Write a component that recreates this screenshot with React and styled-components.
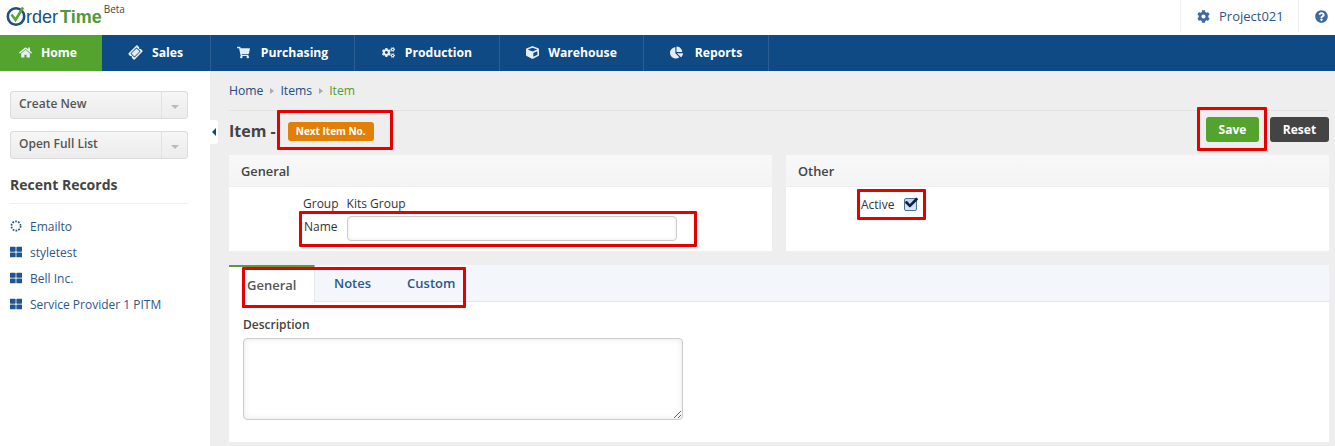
import React from "react";
import styled, { createGlobalStyle } from "styled-components";
import {
  FaHome,
  FaTicketAlt,
  FaShoppingCart,
  FaCogs,
  FaCube,
  FaChartPie,
  FaCog,
  FaQuestionCircle,
  FaThLarge,
  FaCheck,
} from "react-icons/fa";

const GlobalStyle = createGlobalStyle`
  html, body {
    margin: 0;
    padding: 0;
    height: 446px;
    overflow: hidden;
    background: #eee;
    font-family: "Open Sans", "Liberation Sans", sans-serif;
    font-size: 12px;
    color: #444;
  }
  * { box-sizing: border-box; }
`;

const Page = styled.div`
  width: 1335px;
  height: 446px;
  display: flex;
  flex-direction: column;
  overflow: hidden;
`;

const TopBar = styled.header`
  height: 35px;
  background: #fff;
  display: flex;
  justify-content: space-between;
`;

const Logo = styled.div`
  display: flex;
  align-items: flex-start;
  padding: 5px 0 0 6px;
`;

const LogoWord = styled.span`
  font-family: "Liberation Sans", sans-serif;
  font-weight: ${(p) => p.$weight};
  font-size: 18px;
  line-height: 24px;
  color: ${(p) => p.$color};
  margin-left: ${(p) => p.$gap || 0}px;
`;

const LogoBeta = styled.sup`
  font-size: 10px;
  line-height: 12px;
  color: #444;
  margin: -2px 0 0 2px;
  vertical-align: baseline;
`;

const TopRight = styled.div`
  display: flex;
  height: 32px;
`;

const TopCell = styled.div`
  display: flex;
  align-items: center;
  gap: 9px;
  height: 32px;
  width: ${(p) => p.$width}px;
  padding-left: ${(p) => p.$pad}px;
  border-left: 1px solid #eee;
  color: #2f5688;
  font-size: 13px;
  svg {
    color: #3f6aa0;
    font-size: 13px;
  }
`;

const Nav = styled.nav`
  height: 36px;
  background: #0f4a84;
  display: flex;
`;

const NavItem = styled.div`
  width: ${(p) => p.$width}px;
  display: flex;
  align-items: center;
  justify-content: center;
  gap: ${(p) => p.$gap}px;
  padding-bottom: 2px;
  padding-right: ${(p) => p.$shift || 0}px;
  color: #fff;
  font-size: 12.2px;
  font-weight: 700;
  background: ${(p) => (p.$active ? "#55a32f" : "transparent")};
  border-right: ${(p) => (p.$active ? "none" : "1px solid #2b5f94")};
  svg {
    font-size: 13px;
    color: #e6edf4;
  }
`;

const TicketIcon = styled(FaTicketAlt)`
  transform: rotate(-45deg);
`;

const Body = styled.div`
  flex: 1;
  display: flex;
  min-height: 0;
`;

const Sidebar = styled.aside`
  width: 210px;
  background: #fff;
  padding: 20px 22px 0 10px;
  position: relative;
`;

const CollapseTab = styled.div`
  position: absolute;
  left: 210px;
  top: 49px;
  width: 8px;
  height: 24px;
  background: #fff;
  border-radius: 0 3px 3px 0;
  display: flex;
  align-items: center;
  justify-content: center;
  &::before {
    content: "";
    border-style: solid;
    border-width: 4px 4px 4px 0;
    border-color: transparent #0f4a84 transparent transparent;
  }
`;

const SplitButton = styled.div`
  display: flex;
  height: 28px;
  margin-bottom: 12px;
  border: 1px solid #ddd;
  border-radius: 3px;
  background: linear-gradient(#f6f6f6, #ececec);
  color: #555;
  font-weight: 600;
  font-size: 12px;
`;

const SplitLabel = styled.span`
  flex: 1;
  padding: 3px 0 0 8px;
`;

const SplitCaret = styled.span`
  width: 26px;
  border-left: 1px solid #e2e2e2;
  display: flex;
  align-items: center;
  justify-content: center;
  padding-top: 4px;
  &::before {
    content: "";
    border-style: solid;
    border-width: 4px 4px 0 4px;
    border-color: #bbb transparent transparent transparent;
  }
`;

const SideHeading = styled.h3`
  margin: 16px 0 0;
  padding-bottom: 8px;
  font-size: 14px;
  line-height: 20px;
  font-weight: 700;
  color: #444;
  border-bottom: 1px solid #eee;
`;

const RecordList = styled.ul`
  list-style: none;
  margin: 9px 0 0;
  padding: 0;
`;

const RecordRow = styled.li`
  height: 26px;
  display: flex;
  align-items: center;
  gap: 8px;
  color: #2f5688;
  font-size: 12px;
  white-space: nowrap;
  svg {
    width: 12px;
    font-size: 12px;
    color: #1f5590;
  }
`;

const Main = styled.main`
  flex: 1;
  padding: 10px 6px 0 19px;
  min-width: 0;
`;

const Breadcrumb = styled.div`
  display: flex;
  align-items: center;
  gap: 6.5px;
  height: 19px;
`;

const Crumb = styled.span`
  color: ${(p) => (p.$current ? "#4f9f2a" : "#234c80")};
  font-size: 12.2px;
`;

const CrumbArrow = styled.span`
  border-style: solid;
  border-width: 3.5px 0 3.5px 4px;
  border-color: transparent transparent transparent #aaa;
`;

const TitleRow = styled.div`
  display: flex;
  align-items: center;
  justify-content: space-between;
  margin-top: 10px;
  height: 45px;
  padding-bottom: 3px;
  background: linear-gradient(#e3e3e3, #e3e3e3) top left / 100% 1px no-repeat;
`;

const TitleLeft = styled.div`
  display: flex;
  align-items: center;
  gap: 12px;
`;

const Title = styled.h1`
  margin: 0;
  font-size: 16px;
  font-weight: 700;
  color: #444;
`;

const Badge = styled.span`
  display: inline-flex;
  align-items: center;
  justify-content: center;
  width: 86px;
  height: 19px;
  border-radius: 3px;
  background: #e27f07;
  color: #fff;
  font-size: 10px;
  font-weight: 700;
`;

const Actions = styled.div`
  display: flex;
  gap: 11px;
  margin-top: -3px;
`;

const Button = styled.button`
  display: block;
  width: ${(p) => p.$width}px;
  height: 25px;
  border: none;
  border-radius: 3px;
  background: ${(p) => p.$bg};
  color: #fff;
  font-family: inherit;
  font-size: 12px;
  font-weight: 700;
  padding: 0;
`;

// red annotation box drawn over a part of the form
const Marked = styled.div`
  position: relative;
  &::after {
    content: "";
    position: absolute;
    inset: ${(p) => p.$inset};
    border: 3px solid #e60000;
    border-radius: 1px;
    pointer-events: none;
  }
`;

const PanelRow = styled.div`
  display: grid;
  grid-template-columns: 543px 543px;
  gap: 14px;
`;

const Panel = styled.section`
  height: 96px;
  background: #fff;
`;

const PanelHead = styled.div`
  height: 32px;
  padding: 8px 0 0 12px;
  background: linear-gradient(#f8f8f8, #f4f4f4);
  border-bottom: 1px solid #eee;
  font-size: 12.8px;
  font-weight: 600;
  line-height: 17px;
  color: #444;
`;

const FieldRow = styled.div`
  display: flex;
  align-items: center;
  height: ${(p) => p.$height}px;
  padding: ${(p) => p.$top || 0}px 0 0 ${(p) => p.$indent}px;
  gap: ${(p) => p.$gap}px;
  font-size: 12px;
  color: #333;
`;

const NameLabel = styled.span`
  font-weight: 500;
  margin-top: -4px;
`;

const NameInput = styled.div`
  width: 330px;
  height: 25px;
  border: 1px solid #ccc;
  border-radius: 4px;
  background: #fff;
  box-shadow: inset 0 0 4px rgba(0, 0, 0, 0.08);
`;

const ActiveField = styled.div`
  display: flex;
  align-items: center;
  gap: 10px;
  font-weight: 500;
`;

const CheckBox = styled.span`
  position: relative;
  width: 13px;
  height: 13px;
  border: 1px solid #4a6f9c;
  border-radius: 2px;
  background: linear-gradient(#bcd3f0, #dce9f8);
  svg {
    position: absolute;
    left: 0;
    top: -3px;
    font-size: 13px;
    color: #0c2340;
  }
`;

const TabPanel = styled.section`
  margin-top: 14px;
  height: 177px;
  background: #fff;
`;

const TabStrip = styled.div`
  display: flex;
  height: 37px;
  background: #f3f6fb;
  border-bottom: 1px solid #e4e7ec;
`;

const ActiveTab = styled.div`
  width: 86px;
  height: 37px;
  padding: 9px 0 0 18px;
  background: #fff;
  border-top: 2px solid #5d9a3a;
  border-right: 1px solid #e4e7ec;
  color: #555;
  font-size: 13px;
  font-weight: 600;
`;

const Tab = styled.div`
  padding: 9px 0 0 ${(p) => p.$pad}px;
  color: #2f5688;
  font-size: 13px;
  font-weight: 600;
`;

const TabBody = styled.div`
  padding: 15px 14px 0;
`;

const FieldLabel = styled.div`
  font-size: 12px;
  font-weight: 600;
  line-height: 16px;
  color: #444;
  margin-bottom: 5px;
`;

const TextArea = styled.textarea`
  display: block;
  width: 440px;
  height: 82px;
  border: 1px solid #ccc;
  border-radius: 4px;
  background: #fff;
  box-shadow: inset 0 0 6px rgba(0, 0, 0, 0.1);
  outline: none;
`;

const DottedCircle = () => (
  <svg width="12" height="12" viewBox="0 0 12 12">
    <circle
      cx="6"
      cy="6"
      r="4.6"
      fill="none"
      stroke="#1f5590"
      strokeWidth="1.7"
      strokeDasharray="1.7 1.2"
    />
  </svg>
);

const navItems = [
  { label: "Sales", icon: <TicketIcon />, width: 109, gap: 10 },
  { label: "Purchasing", icon: <FaShoppingCart />, width: 144, gap: 11 },
  { label: "Production", icon: <FaCogs />, width: 145, gap: 10 },
  { label: "Warehouse", icon: <FaCube />, width: 144, gap: 9 },
  { label: "Reports", icon: <FaChartPie />, width: 125, gap: 12 },
];

const records = [
  { label: "Emailto", icon: <DottedCircle /> },
  { label: "styletest", icon: <FaThLarge /> },
  { label: "Bell Inc.", icon: <FaThLarge /> },
  { label: "Service Provider 1 PITM", icon: <FaThLarge /> },
];

const App = () => {
  return (
    <Page>
      <GlobalStyle />
      <TopBar>
        <Logo>
          <svg width="20" height="22" viewBox="0 0 20 22">
            <circle cx="10" cy="11.5" r="8.2" fill="none" stroke="#1d4f80" strokeWidth="2.6" />
            <path d="M5.5 9.5 L9.5 15 L17 2.5" fill="none" stroke="#5aa535" strokeWidth="2.6" />
          </svg>
          <LogoWord $color="#1d4f80" $weight={400}>rder</LogoWord>
          <LogoWord $color="#4f9b3b" $weight={700} $gap={2}>Time</LogoWord>
          <LogoBeta>Beta</LogoBeta>
        </Logo>
        <TopRight>
          <TopCell $width={118} $pad={16}>
            <FaCog />
            Project021
          </TopCell>
          <TopCell $width={37} $pad={16}>
            <FaQuestionCircle />
          </TopCell>
        </TopRight>
      </TopBar>
      <Nav>
        <NavItem $active $width={102} $gap={9} $shift={6}>
          <FaHome />
          Home
        </NavItem>
        {navItems.map((item) => (
          <NavItem key={item.label} $width={item.width} $gap={item.gap}>
            {item.icon}
            {item.label}
          </NavItem>
        ))}
      </Nav>
      <Body>
        <Sidebar>
          <SplitButton>
            <SplitLabel>Create New</SplitLabel>
            <SplitCaret />
          </SplitButton>
          <SplitButton>
            <SplitLabel>Open Full List</SplitLabel>
            <SplitCaret />
          </SplitButton>
          <SideHeading>Recent Records</SideHeading>
          <RecordList>
            {records.map((record) => (
              <RecordRow key={record.label}>
                {record.icon}
                {record.label}
              </RecordRow>
            ))}
          </RecordList>
          <CollapseTab />
        </Sidebar>
        <Main>
          <Breadcrumb>
            <Crumb>Home</Crumb>
            <CrumbArrow />
            <Crumb>Items</Crumb>
            <CrumbArrow />
            <Crumb $current>Item</Crumb>
          </Breadcrumb>
          <TitleRow>
            <TitleLeft>
              <Title>Item -</Title>
              <Marked $inset="-12px -19px -9px -11px">
                <Badge>Next Item No.</Badge>
              </Marked>
            </TitleLeft>
            <Actions>
              <Marked $inset="-10px -8px -9px -9px">
                <Button $width={53} $bg="#55a32f">Save</Button>
              </Marked>
              <Button $width={59} $bg="#444">Reset</Button>
            </Actions>
          </TitleRow>
          <PanelRow>
            <Panel>
              <PanelHead>General</PanelHead>
              <FieldRow $height={27} $top={5} $indent={74} $gap={8}>
                <span>Group</span>
                <span>Kits Group</span>
              </FieldRow>
              <Marked $inset="-3px 75px -4px 70px">
                <FieldRow $height={29} $indent={75} $gap={9}>
                  <NameLabel>Name</NameLabel>
                  <NameInput />
                </FieldRow>
              </Marked>
            </Panel>
            <Panel>
              <PanelHead>Other</PanelHead>
              <FieldRow $height={34} $indent={75} $gap={0}>
                <Marked $inset="-7px -9px -7px -4px">
                  <ActiveField>
                    Active
                    <CheckBox>
                      <FaCheck />
                    </CheckBox>
                  </ActiveField>
                </Marked>
              </FieldRow>
            </Panel>
          </PanelRow>
          <TabPanel>
            <Marked $inset="2px 863px -6px 13px">
              <TabStrip>
                <ActiveTab>General</ActiveTab>
                <Tab $pad={19}>Notes</Tab>
                <Tab $pad={36}>Custom</Tab>
              </TabStrip>
            </Marked>
            <TabBody>
              <FieldLabel>Description</FieldLabel>
              <TextArea />
            </TabBody>
          </TabPanel>
        </Main>
      </Body>
    </Page>
  );
};

export default App;
